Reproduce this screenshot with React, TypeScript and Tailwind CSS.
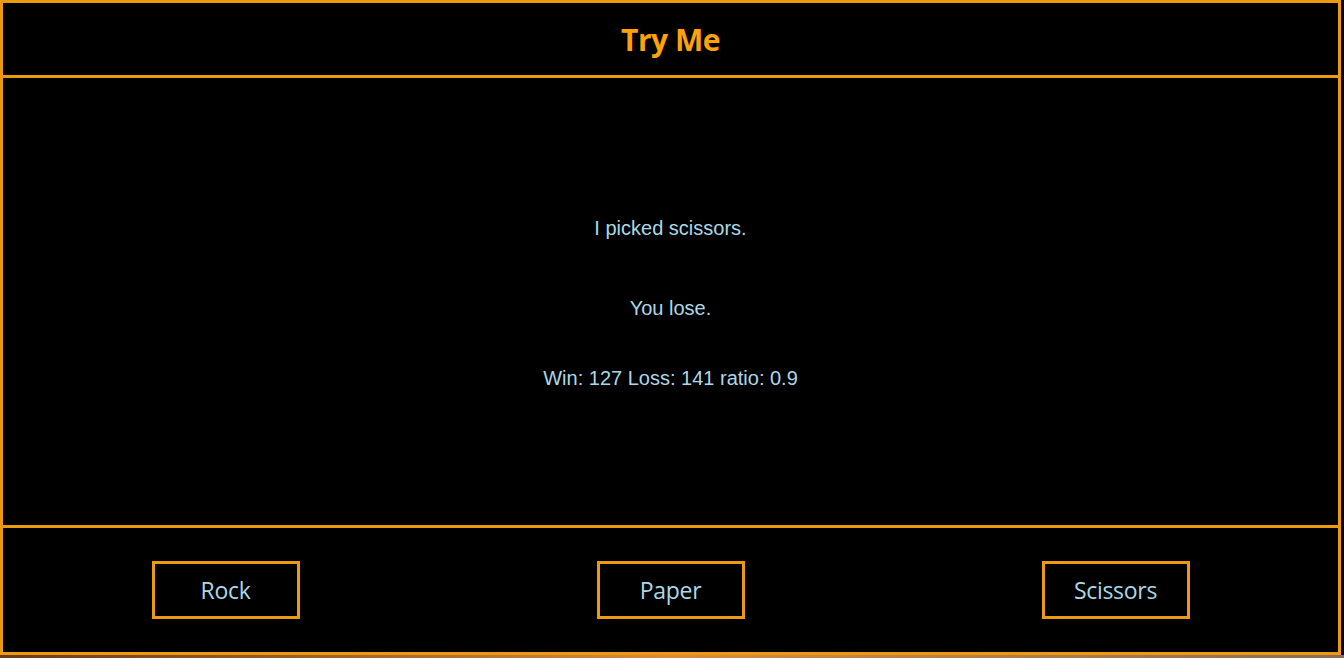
export default function App() {
  const picks = ["Rock", "Paper", "Scissors"];

  return (
    <div className="h-screen w-full overflow-hidden bg-black font-['Liberation_Sans',Arial,sans-serif]">
      <div className="flex h-[655px] w-[1341px] flex-col border-[3px] border-[#ec9a10]">
        {/* header */}
        <div className="flex h-[75px] shrink-0 items-center justify-center border-b-[3px] border-[#ec9a10] pt-[2px]">
          <h1 className="text-[30px] font-bold leading-none text-[#ffa20a] font-['Open_Sans',sans-serif] tracking-[-0.5px]">
            Try Me
          </h1>
        </div>

        {/* result */}
        <div className="flex flex-1 flex-col items-center justify-center border-b-[3px] border-[#ec9a10] pt-[2px] text-[20px] text-[#add8e6]">
          <p className="leading-[24px]">I picked scissors.</p>
          <p className="mt-[56px] leading-[24px]">You lose.</p>
          <p className="mt-[46px] leading-[24px]">Win: 127 Loss: 141 ratio: 0.9</p>
        </div>

        {/* choices */}
        <div className="grid h-[124px] shrink-0 grid-cols-3 items-center">
          {picks.map((p) => (
            <div key={p} className="flex justify-center">
              <button className="h-[58px] w-[148px] border-[3px] border-[#ec9a10] bg-black text-[23px] text-[#add8e6] font-['Open_Sans',sans-serif] tracking-[-0.3px]">
                {p}
              </button>
            </div>
          ))}
        </div>
      </div>
      <div className="h-[3px] w-full bg-gradient-to-r from-[#6b3a1a] via-[#d98a3a] to-[#8a6a50]" />
    </div>
  );
}
